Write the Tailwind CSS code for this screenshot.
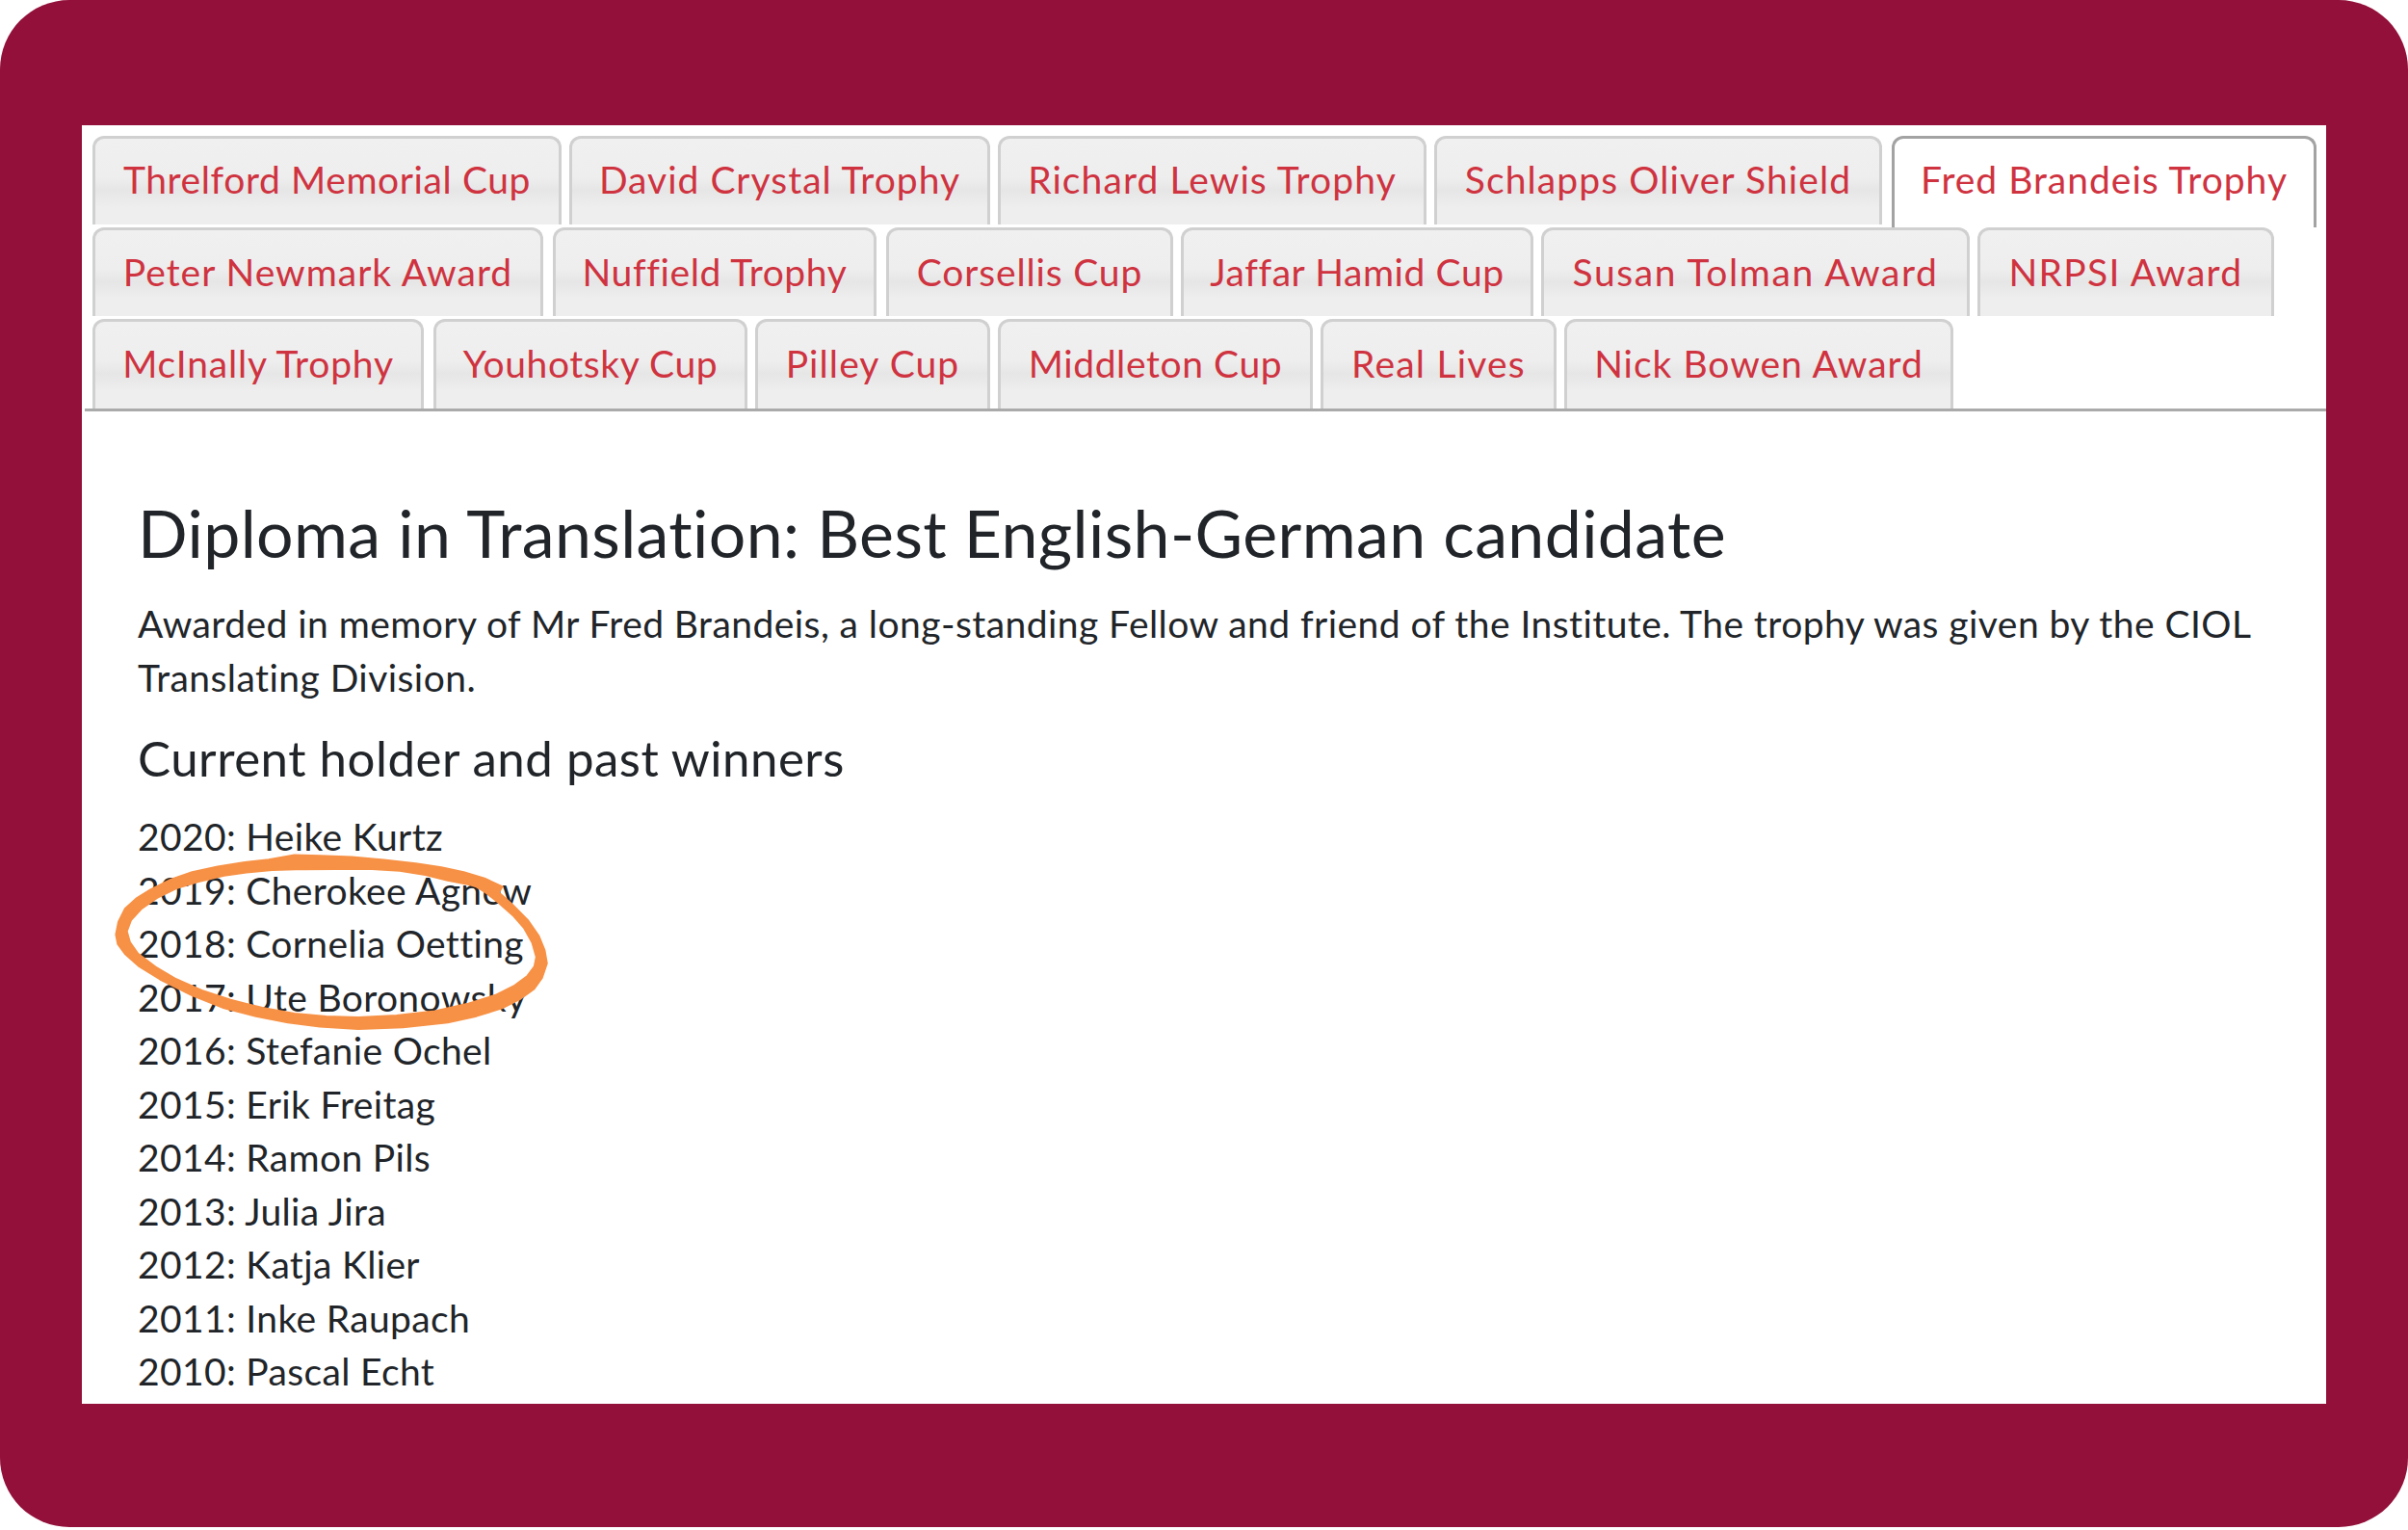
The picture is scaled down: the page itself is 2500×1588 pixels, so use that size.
<!DOCTYPE html>
<html lang="en">
<head>
  <meta charset="UTF-8">
  <title>Fred Brandeis Trophy - CIOL Awards</title>
  <script src="https://cdn.jsdelivr.net/npm/@tailwindcss/browser@4"></script>
</head>
<body class="bg-white w-[2500px] h-[1588px] overflow-hidden font-['Lato','Noto_Sans',sans-serif] text-[39px] text-[#212529]">
  <div class="w-[2500px] h-[1585px] bg-[#92103a] rounded-[72px] pt-[130px] pl-[85px]">
    <div class="relative w-[2330px] h-[1327px] bg-white overflow-hidden">

      <!-- tabs -->
      <div class="ml-[3px] pt-[11px] pl-[8px] h-[297px] border-b-[3px] border-[#aaaaaa] flex flex-col gap-[3px] text-[#cf3340]">
        <div class="flex gap-[8px] h-[92px]">
          <a class="w-[487px] h-[92px] pb-[4px] tracking-[0.6px] flex items-center justify-center border-[3px] border-b-0 border-[#d0d0d0] rounded-t-[12px] bg-[linear-gradient(#f0f0f0_0%,#eeeeee_45%,#e6e6e6_60%,#eeeeee_80%)]">Threlford Memorial Cup</a>
          <a class="w-[437px] h-[92px] pb-[4px] tracking-[1px] flex items-center justify-center border-[3px] border-b-0 border-[#d0d0d0] rounded-t-[12px] bg-[linear-gradient(#f0f0f0_0%,#eeeeee_45%,#e6e6e6_60%,#eeeeee_80%)]">David Crystal Trophy</a>
          <a class="w-[445px] h-[92px] pb-[4px] tracking-[1.1px] flex items-center justify-center border-[3px] border-b-0 border-[#d0d0d0] rounded-t-[12px] bg-[linear-gradient(#f0f0f0_0%,#eeeeee_45%,#e6e6e6_60%,#eeeeee_80%)]">Richard Lewis Trophy</a>
          <a class="w-[465px] h-[92px] pb-[4px] tracking-[1.1px] flex items-center justify-center border-[3px] border-b-0 border-[#d0d0d0] rounded-t-[12px] bg-[linear-gradient(#f0f0f0_0%,#eeeeee_45%,#e6e6e6_60%,#eeeeee_80%)]">Schlapps Oliver Shield</a>
          <a class="w-[441px] h-[95px] ml-[2px] pb-[7px] tracking-[1px] flex items-center justify-center border-[3px] border-b-0 border-[#a3a3a3] rounded-t-[12px] bg-white relative">Fred Brandeis Trophy</a>
        </div>
        <div class="flex gap-[10px] h-[92px]">
          <a class="w-[468px] h-[92px] pb-[3px] tracking-[1px] flex items-center justify-center border-[3px] border-b-0 border-[#d0d0d0] rounded-t-[12px] bg-[linear-gradient(#f0f0f0_0%,#eeeeee_45%,#e6e6e6_60%,#eeeeee_80%)]">Peter Newmark Award</a>
          <a class="w-[336px] h-[92px] pb-[3px] tracking-[0.6px] flex items-center justify-center border-[3px] border-b-0 border-[#d0d0d0] rounded-t-[12px] bg-[linear-gradient(#f0f0f0_0%,#eeeeee_45%,#e6e6e6_60%,#eeeeee_80%)]">Nuffield Trophy</a>
          <a class="w-[298px] h-[92px] pb-[3px] tracking-[0.85px] flex items-center justify-center border-[3px] border-b-0 border-[#d0d0d0] rounded-t-[12px] bg-[linear-gradient(#f0f0f0_0%,#eeeeee_45%,#e6e6e6_60%,#eeeeee_80%)]">Corsellis Cup</a>
          <a class="w-[366px] h-[92px] pb-[3px] -ml-[2px] tracking-[0.6px] flex items-center justify-center border-[3px] border-b-0 border-[#d0d0d0] rounded-t-[12px] bg-[linear-gradient(#f0f0f0_0%,#eeeeee_45%,#e6e6e6_60%,#eeeeee_80%)]">Jaffar Hamid Cup</a>
          <a class="w-[445px] h-[92px] pb-[3px] -ml-[2px] tracking-[1.6px] flex items-center justify-center border-[3px] border-b-0 border-[#d0d0d0] rounded-t-[12px] bg-[linear-gradient(#f0f0f0_0%,#eeeeee_45%,#e6e6e6_60%,#eeeeee_80%)]">Susan Tolman Award</a>
          <a class="w-[308px] h-[92px] pb-[3px] -ml-[2px] tracking-[1.3px] flex items-center justify-center border-[3px] border-b-0 border-[#d0d0d0] rounded-t-[12px] bg-[linear-gradient(#f0f0f0_0%,#eeeeee_45%,#e6e6e6_60%,#eeeeee_80%)]">NRPSI Award</a>
        </div>
        <div class="flex gap-[8px] h-[93px]">
          <a class="w-[344px] h-[93px] pb-[3px] tracking-[0.8px] flex items-center justify-center border-[3px] border-b-0 border-[#d0d0d0] rounded-t-[12px] bg-[linear-gradient(#f0f0f0_0%,#eeeeee_45%,#e6e6e6_60%,#eeeeee_80%)]">McInally Trophy</a>
          <a class="w-[326px] h-[93px] pb-[3px] ml-[2px] tracking-[0.6px] flex items-center justify-center border-[3px] border-b-0 border-[#d0d0d0] rounded-t-[12px] bg-[linear-gradient(#f0f0f0_0%,#eeeeee_45%,#e6e6e6_60%,#eeeeee_80%)]">Youhotsky Cup</a>
          <a class="w-[244px] h-[93px] pb-[3px] tracking-[1.1px] flex items-center justify-center border-[3px] border-b-0 border-[#d0d0d0] rounded-t-[12px] bg-[linear-gradient(#f0f0f0_0%,#eeeeee_45%,#e6e6e6_60%,#eeeeee_80%)]">Pilley Cup</a>
          <a class="w-[327px] h-[93px] pb-[3px] tracking-[0.6px] flex items-center justify-center border-[3px] border-b-0 border-[#d0d0d0] rounded-t-[12px] bg-[linear-gradient(#f0f0f0_0%,#eeeeee_45%,#e6e6e6_60%,#eeeeee_80%)]">Middleton Cup</a>
          <a class="w-[245px] h-[93px] pb-[3px] tracking-[1.2px] flex items-center justify-center border-[3px] border-b-0 border-[#d0d0d0] rounded-t-[12px] bg-[linear-gradient(#f0f0f0_0%,#eeeeee_45%,#e6e6e6_60%,#eeeeee_80%)]">Real Lives</a>
          <a class="w-[404px] h-[93px] pb-[3px] tracking-[1px] flex items-center justify-center border-[3px] border-b-0 border-[#d0d0d0] rounded-t-[12px] bg-[linear-gradient(#f0f0f0_0%,#eeeeee_45%,#e6e6e6_60%,#eeeeee_80%)]">Nick Bowen Award</a>
        </div>
      </div>

      <!-- tab content -->
      <div class="pl-[58px] pr-[60px] pt-[81px]">
        <h2 class="text-[68px] leading-[90px] tracking-[0.39px]">Diploma in Translation: Best English-German candidate</h2>
        <p class="mt-[22px] leading-[55.5px] tracking-[0.44px]">Awarded in memory of Mr Fred Brandeis, a long-standing Fellow and friend of the Institute. The trophy was given by the CIOL Translating Division.</p>
        <h3 class="mt-[21px] text-[51px] leading-[70px] tracking-[0.5px]">Current holder and past winners</h3>
        <ul class="mt-[19px] leading-[55.5px] tracking-[0.35px]">
          <li>2020: Heike Kurtz</li>
          <li>2019: Cherokee Agnew</li>
          <li>2018: Cornelia Oetting</li>
          <li>2017: Ute Boronowsky</li>
          <li>2016: Stefanie Ochel</li>
          <li>2015: Erik Freitag</li>
          <li>2014: Ramon Pils</li>
          <li>2013: Julia Jira</li>
          <li>2012: Katja Klier</li>
          <li>2011: Inke Raupach</li>
          <li>2010: Pascal Echt</li>
        </ul>
      </div>

      <!-- hand drawn circle over the 2018 row -->
      <svg class="absolute left-[15px] top-[700px] w-[520px] h-[260px]" viewBox="0 0 1568 780">
        <path fill="#f79145" stroke="#f79145" stroke-width="7" stroke-linejoin="round" d="M620 172 L700 174 L800 178 L900 187 L1000 198 L1080 210 L1150 225 L1215 245 L1270 270 L1262 285 L1240 285 L1170 264 L1100 250 L1030 233 L950 220 L850 214 L750 215 L650 215 L550 218 L470 225 L400 235 L320 254 L250 275 L190 305 L140 340 L108 375 L95 410 L105 445 L130 480 L185 522 L250 560 L330 595 L420 625 L520 650 L620 668 L720 677 L820 680 L940 674 L1060 660 L1160 638 L1250 610 L1310 580 L1350 550 L1372 520 L1378 490 L1365 445 L1340 400 L1305 360 L1260 320 L1215 285 L1165 255 L1200 258 L1250 280 L1300 325 L1350 375 L1385 425 L1403 470 L1410 510 L1395 555 L1370 590 L1325 622 L1270 650 L1190 675 L1100 695 L960 710 L820 715 L700 708 L600 695 L500 675 L400 650 L300 610 L200 560 L135 520 L90 480 L68 450 L62 420 L70 380 L90 340 L125 308 L170 280 L235 248 L300 225 L380 208 L460 195 L540 186 Z"/>
      </svg>
    </div>
  </div>
</body>
</html>
